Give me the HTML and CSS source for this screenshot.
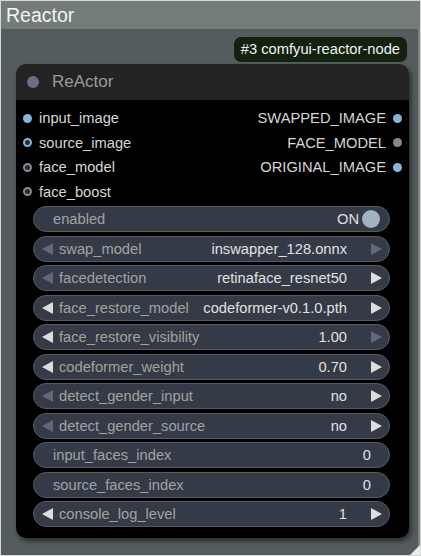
FILE: index.html
```html
<!DOCTYPE html>
<html>
<head>
<meta charset="utf-8">
<link rel="stylesheet" href="styles.css">
</head>
<body>
<div class="frame">
  <div class="group-title">Reactor</div>
  <div class="group-body">
    <div class="badge-row"><span class="badge">#3 comfyui-reactor-node</span></div>
    <div class="node">
      <div class="node-header"><span class="node-dot"></span><span class="node-title">ReActor</span></div>
      <div class="node-body">
        <div class="slots">
          <div class="slot-row">
            <div class="in"><span class="dot blue"></span>input_image</div>
            <div class="out">SWAPPED_IMAGE<span class="dot blue"></span></div>
          </div>
          <div class="slot-row">
            <div class="in"><span class="dot ring blue-ring"></span>source_image</div>
            <div class="out">FACE_MODEL<span class="dot gray"></span></div>
          </div>
          <div class="slot-row">
            <div class="in"><span class="dot ring gray-ring"></span>face_model</div>
            <div class="out">ORIGINAL_IMAGE<span class="dot blue"></span></div>
          </div>
          <div class="slot-row">
            <div class="in"><span class="dot ring gray-ring"></span>face_boost</div>
          </div>
        </div>
        <div class="widgets">
          <div class="widget toggle">
            <span class="label">enabled</span>
            <span class="value">ON</span>
            <span class="knob"></span>
          </div>
          <div class="widget arrows">
            <span class="arr left dim"></span>
            <span class="label">swap_model</span>
            <span class="value">inswapper_128.onnx</span>
            <span class="arr right dim"></span>
          </div>
          <div class="widget arrows">
            <span class="arr left dim"></span>
            <span class="label">facedetection</span>
            <span class="value">retinaface_resnet50</span>
            <span class="arr right"></span>
          </div>
          <div class="widget arrows">
            <span class="arr left"></span>
            <span class="label">face_restore_model</span>
            <span class="value">codeformer-v0.1.0.pth</span>
            <span class="arr right"></span>
          </div>
          <div class="widget arrows">
            <span class="arr left"></span>
            <span class="label">face_restore_visibility</span>
            <span class="value">1.00</span>
            <span class="arr right dim"></span>
          </div>
          <div class="widget arrows">
            <span class="arr left"></span>
            <span class="label">codeformer_weight</span>
            <span class="value">0.70</span>
            <span class="arr right"></span>
          </div>
          <div class="widget arrows">
            <span class="arr left dim"></span>
            <span class="label">detect_gender_input</span>
            <span class="value">no</span>
            <span class="arr right"></span>
          </div>
          <div class="widget arrows">
            <span class="arr left dim"></span>
            <span class="label">detect_gender_source</span>
            <span class="value">no</span>
            <span class="arr right"></span>
          </div>
          <div class="widget plain">
            <span class="label">input_faces_index</span>
            <span class="value">0</span>
          </div>
          <div class="widget plain">
            <span class="label">source_faces_index</span>
            <span class="value">0</span>
          </div>
          <div class="widget arrows">
            <span class="arr left"></span>
            <span class="label">console_log_level</span>
            <span class="value">1</span>
            <span class="arr right"></span>
          </div>
        </div>
      </div>
    </div>
  </div>
  <span class="resize"></span>
</div>
</body>
</html>
```

FILE: styles.css
```css
* { box-sizing: border-box; }
html, body { margin: 0; padding: 0; background: #555c5c; }
body { font-family: "Liberation Sans", Arial, sans-serif; }

.frame {
  position: relative;
  width: 421px;
  height: 556px;
  border: 1px solid #d6d8d8;
  display: flex;
  flex-direction: column;
  overflow: hidden;
}

.group-title {
  height: 28px;
  flex: none;
  background: #737c78;
  color: #f4f4f4;
  font-size: 19.5px;
  line-height: 28px;
  padding-left: 5px;
}

.group-body {
  flex: 1;
  background: #555c5d;
  border-right: 2px solid #7c8483;
  padding: 8px 8px 0 15px;
}

.badge-row {
  display: flex;
  justify-content: flex-end;
  padding-right: 3px;
}

.badge {
  height: 25px;
  line-height: 25px;
  padding: 0 7px;
  background: #12220f;
  color: #f2f2f2;
  border-radius: 7px;
  font-size: 14.7px;
}

.node {
  margin-top: 2px;
  width: 393px;
  border-radius: 10px;
  box-shadow: 2px 3px 5px rgba(0,0,0,0.55);
  overflow: hidden;
}

.node-header {
  height: 36px;
  background: #232323;
  display: flex;
  align-items: center;
  padding-left: 11px;
}

.node-dot {
  width: 12px;
  height: 12px;
  border-radius: 50%;
  background: #6a6f86;
}

.node-title {
  margin-left: 13px;
  color: #9a9a9a;
  font-size: 17px;
}

.node-body {
  background: #000;
  padding: 6px 0 11px 0;
}

.slot-row {
  height: 24.5px;
  display: flex;
  align-items: center;
  justify-content: space-between;
  font-size: 14.7px;
  color: #d6d6d6;
  padding: 0 7px 0 7px;
}

.in, .out {
  display: flex;
  align-items: center;
}

.dot {
  width: 9px;
  height: 9px;
  border-radius: 50%;
  display: inline-block;
  flex: none;
}
.in .dot { margin-right: 7px; }
.out .dot { margin-left: 7px; }
.dot.blue { background: #86b4da; }
.dot.gray { background: #8a8594; }
.dot.ring { border: 2.5px solid; background: #2a2a2e; }
.dot.blue-ring { border-color: #86b4da; }
.dot.gray-ring { border-color: #8d8896; }

.widgets {
  margin-top: 2px;
  padding: 0 19px 0 17px;
  display: flex;
  flex-direction: column;
  gap: 3.5px;
}

.widget {
  height: 26px;
  background: #353b46;
  border: 1px solid #535a68;
  border-radius: 13px;
  display: flex;
  align-items: center;
  font-size: 14.7px;
  white-space: nowrap;
}

.label { color: #a2a2a2; }
.value { color: #e0e0e0; margin-left: auto; }

.widget.toggle { padding: 0 9px 0 19px; }
.widget.toggle .knob {
  width: 18px;
  height: 18px;
  border-radius: 50%;
  background: #a3b1c1;
  margin-left: 3px;
}

.widget.plain { padding: 0 18px 0 19px; }

.widget.arrows { padding: 0 7px 0 8px; }
.widget.arrows .label { margin-left: 6px; }
.widget.arrows .value { margin-right: 24px; }

.arr {
  width: 0;
  height: 0;
  border-top: 6.5px solid transparent;
  border-bottom: 6.5px solid transparent;
  flex: none;
}
.arr.left { border-right: 11px solid #dcdcdc; }
.arr.right { border-left: 11px solid #dcdcdc; }
.arr.left.dim { border-right-color: #626877; }
.arr.right.dim { border-left-color: #626877; }

.resize {
  position: absolute;
  right: 0;
  bottom: 0;
  width: 0;
  height: 0;
  border-left: 10px solid transparent;
  border-bottom: 10px solid #e8ecea;
}
```
